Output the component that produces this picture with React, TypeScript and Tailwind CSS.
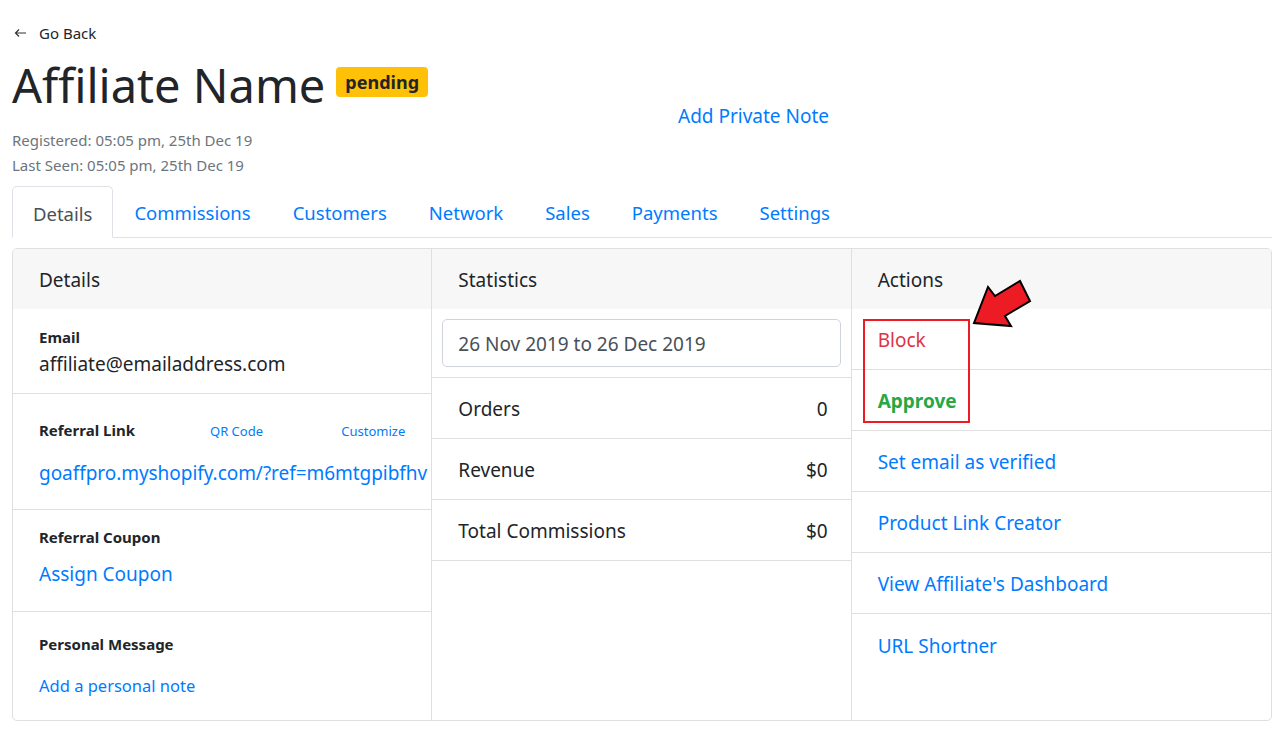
import React from "react";

const tabs = ["Details", "Commissions", "Customers", "Network", "Sales", "Payments", "Settings"];

const stats = [
	{ label: "Orders", value: "0" },
	{ label: "Revenue", value: "$0" },
	{ label: "Total Commissions", value: "$0" },
];

const actions = [
	{ label: "Set email as verified" },
	{ label: "Product Link Creator" },
	{ label: "View Affiliate's Dashboard" },
	{ label: "URL Shortner" },
];

function ColumnHeader({ title }: { title: string }) {
	return (
		<div className="h-[60px] bg-[#f7f7f7] flex items-center px-[26px] pt-[3px] text-[19px] text-[#212529]">
			{title}
		</div>
	);
}

export default function App() {
	return (
		<div className="min-h-screen bg-white text-[#212529] pl-[12px] pr-[11px] pb-4" style={{ fontFamily: '"Noto Sans", "Open Sans", sans-serif' }}>
			<div className="pt-[23px] flex items-center text-[15px] leading-5 text-[#212529]">
				<svg width="13" height="10" viewBox="0 0 13 10" className="ml-[2px] mr-[12px]" fill="none" stroke="#333" strokeWidth="1.2">
					<path d="M12 5H1.5M5 1.5L1.5 5L5 8.5" />
				</svg>
				<span>Go Back</span>
			</div>

			<div className="flex">
				<div className="w-[666px]">
					<div className="flex items-center mt-[12px]">
						<h1 className="text-[47px] leading-[60px] font-normal">Affiliate Name</h1>
						<span className="ml-[11px] -mt-[6px] bg-[#ffc107] rounded-[4px] px-[9px] h-[30px] flex items-center text-[18px] font-bold text-[#212529]">
							pending
						</span>
					</div>
					<div className="mt-[13px] text-[15px] leading-[25px] text-[#6c757d]">
						<div>Registered: 05:05 pm, 25th Dec 19</div>
						<div>Last Seen: 05:05 pm, 25th Dec 19</div>
					</div>
				</div>
				<div className="pt-[59px]">
					<a className="text-[19px] text-[#007bff] leading-7">Add Private Note</a>
				</div>
			</div>

			<div className="mt-[8px] flex border-b border-[#dee2e6] h-[52px]">
				{tabs.map((t, i) => (
					<div
						key={t}
						className={
							i === 0
								? "px-[20px] pt-[3px] flex items-center text-[18.5px] text-[#495057] border border-[#dee2e6] border-b-white rounded-t-[5px] -mb-px bg-white"
								: "px-[21px] pt-[3px] flex items-center text-[18.5px] text-[#007bff]"
						}
					>
						{t}
					</div>
				))}
			</div>

			<div className="mt-[10px] border border-[#dfdfdf] rounded-[5px] grid grid-cols-3 h-[473px] overflow-hidden">
				<div className="border-r border-[#dfdfdf] flex flex-col">
					<ColumnHeader title="Details" />
					<div className="border-b border-[#dfdfdf] h-[85px] px-[26px] pt-[18px]">
						<div className="text-[15px] leading-5 font-bold">Email</div>
						<div className="mt-[3px] text-[19px] leading-7">affiliate@emailaddress.com</div>
					</div>
					<div className="border-b border-[#dfdfdf] h-[116px] pl-[26px] pt-[25px]">
						<div className="flex items-center leading-5 pr-[26px]">
							<span className="text-[15px] font-bold w-[171px]">Referral Link</span>
							<a className="text-[13px] text-[#007bff] mt-[2px]">QR Code</a>
							<a className="ml-auto text-[13px] text-[#007bff] mt-[2px]">Customize</a>
						</div>
						<a className="block mt-[18px] text-[19px] leading-7 text-[#007bff] whitespace-nowrap tracking-[-0.05px]">goaffpro.myshopify.com/?ref=m6mtgpibfhv</a>
					</div>
					<div className="border-b border-[#dfdfdf] h-[102px] px-[26px] pt-[17px]">
						<div className="text-[15px] leading-5 font-bold">Referral Coupon</div>
						<a className="block mt-[13px] text-[19px] leading-7 text-[#007bff]">Assign Coupon</a>
					</div>
					<div className="flex-1 px-[26px] pt-[22px]">
						<div className="text-[15px] leading-5 font-bold">Personal Message</div>
						<a className="block mt-[18px] text-[16.5px] leading-7 text-[#007bff]">Add a personal note</a>
					</div>
				</div>

				<div className="border-r border-[#dfdfdf] flex flex-col">
					<ColumnHeader title="Statistics" />
					<div className="px-[10px] pt-[10px] pb-[10px] border-b border-[#dfdfdf]">
						<div className="h-[48px] border border-[#ced4da] rounded-[5px] flex items-center px-[15px] pt-[2px] text-[19px] text-[#495057]">
							26 Nov 2019 to 26 Dec 2019
						</div>
					</div>
					{stats.map((s) => (
						<div key={s.label} className="h-[61px] border-b border-[#dfdfdf] flex items-center justify-between pl-[26px] pr-[23px] pt-[3px] text-[19px]">
							<span>{s.label}</span>
							<span>{s.value}</span>
						</div>
					))}
				</div>

				<div className="flex flex-col relative">
					<ColumnHeader title="Actions" />
					<div className="h-[61px] border-b border-[#dfdfdf] flex items-center px-[26px] pt-[3px] text-[19px] text-[#dc3545]">Block</div>
					<div className="h-[61px] border-b border-[#dfdfdf] flex items-center px-[26px] pt-[3px] text-[19px] font-bold text-[#28a745]">Approve</div>
					{actions.map((a, i) => (
						<div
							key={a.label}
							className={
								i === actions.length - 1
									? "h-[61px] flex items-center px-[26px] pt-[3px] text-[19px] text-[#007bff]"
									: "h-[61px] border-b border-[#dfdfdf] flex items-center px-[26px] pt-[3px] text-[19px] text-[#007bff]"
							}
						>
							{a.label}
						</div>
					))}

					<div className="absolute left-[11px] top-[70px] w-[107px] h-[104px] border-2 border-[#ed1c24]" />
					<svg className="absolute left-[118px] top-[26px]" width="70" height="60" viewBox="0 0 70 60">
						<polygon
							points="4,48 18,12 25,21 50,6 60,26 35,41 41,51"
							fill="#ed1c24"
							stroke="#000"
							strokeWidth="2"
							strokeLinejoin="miter"
						/>
					</svg>
				</div>
			</div>
		</div>
	);
}
